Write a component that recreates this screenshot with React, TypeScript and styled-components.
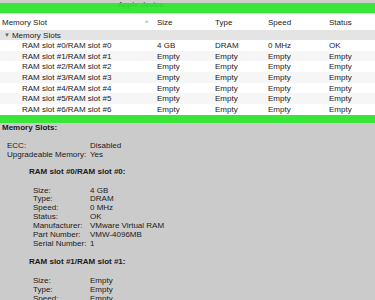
import { Fragment } from "react";
import styled, { createGlobalStyle } from "styled-components";

const Global = createGlobalStyle`
  body {
    margin: 0;
    font-family: "Liberation Sans", Arial, sans-serif;
    color: #222;
  }
`

const Page = styled.div`
  position: relative;
  width: 375px;
  height: 300px;
  overflow: hidden;
  background: #cbcbcb;
  font-size: 8px;
`

const TitleBar = styled.div`
  height: 14px;
  background: #cfcfcf;
  border-bottom: 1px solid #e0e0e0;
  box-sizing: border-box;
  padding: 1px 0 0 118px;
  font-size: 8px;
  line-height: 8px;
  color: #444;
`

// the green marker stripes are drawn over the screenshot
const Marker = styled.div<{ $top: number; $h: number }>`
  position: absolute;
  left: 0;
  right: 0;
  top: ${p => p.$top}px;
  height: ${p => p.$h}px;
  background: rgba(40, 232, 40, 0.9);
`

const Table = styled.div`
  background: #fff;
  height: 101px;
`

const Row = styled.div<{ $h?: number; $bg?: string }>`
  display: grid;
  grid-template-columns: 145px 12px 58px 53px 61px 1fr;
  align-items: center;
  height: ${p => p.$h ?? 10.7}px;
  background: ${p => p.$bg ?? "#fff"};
  white-space: nowrap;
`

const Name = styled.span<{ $pad: number }>`
  padding-left: ${p => p.$pad}px;
`

const Caret = styled.span`
  color: #777;
  font-size: 7px;
`

const GroupRow = styled.div`
  display: flex;
  align-items: center;
  gap: 2px;
  height: 10px;
  padding-left: 4px;
  background: #e4e4e4;
`

const Tri = styled.span`
  font-size: 6px;
  color: #666;
`

const Details = styled.div`
  padding: 0 2px;
  line-height: 8.85px;
  margin-top: 9px;
  color: #1a1a1a;
`

const Heading = styled.div<{ $indent: number; $gap: number }>`
  font-weight: bold;
  padding-left: ${p => p.$indent}px;
  margin-bottom: ${p => p.$gap}px;
`

const Pairs = styled.div<{ $indent: number; $label: number; $gap: number }>`
  display: grid;
  grid-template-columns: ${p => p.$label}px 1fr;
  padding-left: ${p => p.$indent}px;
  margin-bottom: ${p => p.$gap}px;
  white-space: nowrap;
`

const slots = [0, 1, 2, 3, 4, 5, 6]

const slotInfo: [string, string][][] = [
  [
    ["Size:", "4 GB"],
    ["Type:", "DRAM"],
    ["Speed:", "0 MHz"],
    ["Status:", "OK"],
    ["Manufacturer:", "VMware Virtual RAM"],
    ["Part Number:", "VMW-4096MB"],
    ["Serial Number:", "1"],
  ],
  [
    ["Size:", "Empty"],
    ["Type:", "Empty"],
    ["Speed:", "Empty"],
    ["Status:", "Empty"],
  ],
]

export default function App() {
  return (
    <Page>
      <Global />
      <TitleBar>Apple device</TitleBar>
      <Marker $top={3} $h={10} />
      <Table>
        <Row $h={16}>
          <Name $pad={2}>Memory Slot</Name>
          <Caret>^</Caret>
          <span>Size</span>
          <span>Type</span>
          <span>Speed</span>
          <span>Status</span>
        </Row>
        <GroupRow>
          <Tri>▼</Tri>
          <span>Memory Slots</span>
        </GroupRow>
        {slots.map(n => (
          <Row key={n} $bg={n % 2 ? "#f6f6f6" : "#fff"}>
            <Name $pad={22}>RAM slot #{n}/RAM slot #{n}</Name>
            <span />
            <span>{n === 0 ? "4 GB" : "Empty"}</span>
            <span>{n === 0 ? "DRAM" : "Empty"}</span>
            <span>{n === 0 ? "0 MHz" : "Empty"}</span>
            <span>{n === 0 ? "OK" : "Empty"}</span>
          </Row>
        ))}
      </Table>
      <Marker $top={115} $h={8} />
      <Details>
        <Heading $indent={0} $gap={8.85}>Memory Slots:</Heading>
        <Pairs $indent={5} $label={83} $gap={8.85}>
          <span>ECC:</span><span>Disabled</span>
          <span>Upgradeable Memory:</span><span>Yes</span>
        </Pairs>
        {slotInfo.map((info, i) => (
          <div key={i}>
            <Heading $indent={27} $gap={9.5}>RAM slot #{i}/RAM slot #{i}:</Heading>
            <Pairs $indent={31} $label={57} $gap={10}>
              {info.map(([k, v]) => (
                <Fragment key={k}>
                  <span>{k}</span>
                  <span>{v}</span>
                </Fragment>
              ))}
            </Pairs>
          </div>
        ))}
      </Details>
    </Page>
  )
}
